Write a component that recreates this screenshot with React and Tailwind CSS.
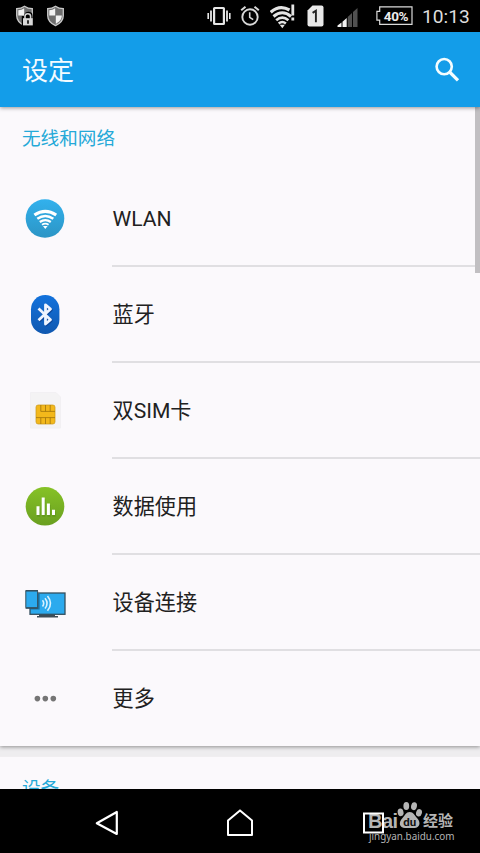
import React from 'react';

// Status bar icons
const Shield = ({ locked }) => (
  <svg width="20" height="22" viewBox="0 0 20 22">
    <path d="M9.5 1.2 C7 3 4.2 3.6 1.7 3.6 V10.5 C1.7 15 5 18.6 9.5 20.6 C14 18.6 17.3 15 17.3 10.5 V3.6 C14.8 3.6 12 3 9.5 1.2Z" fill="#6d6d6d" stroke="#c9c9c9" strokeWidth="1.3" />
    <path d="M9.2 3.2 C7.5 4.4 5.3 5 3.3 5.2 V10.6 H9.2Z" fill="#f2f2f2" />
    <path d="M9.8 10.6 H15.8 C15.8 14.5 13 17.2 9.8 18.9Z" fill="#f2f2f2" />
    {locked && (
      <g>
        <path d="M6.8 11 H9 C9 5.5 17.3 5.5 17.5 10 V22 H6.8Z" fill="#000" />
        <path d="M10 14 V11.3 C10 7.9 15.6 7.9 15.6 11.3 V14" fill="none" stroke="#d4d4d4" strokeWidth="1.6" />
        <rect x="8" y="13.2" width="9.8" height="7.2" fill="#d8d8d8" />
        <path d="M13 15.3 V18.7" stroke="#000" strokeWidth="1.6" />
      </g>
    )}
  </svg>
);

const Vibrate = () => (
  <svg width="24" height="20" viewBox="0 0 24 20" fill="none" stroke="#e6e6e6">
    <rect x="7.1" y="2" width="9.8" height="16" rx="0.5" strokeWidth="2.2" />
    <path d="M4 4.5 V15.5 M20 4.5 V15.5" strokeWidth="1.8" />
    <path d="M1.2 7 V13 M22.8 7 V13" strokeWidth="1.6" />
  </svg>
);

const Alarm = () => (
  <svg width="20" height="22" viewBox="0 0 20 22" fill="none" stroke="#d8d8d8">
    <circle cx="10" cy="12" r="7.7" strokeWidth="1.9" />
    <path d="M1.2 5.3 L5.5 1.7 M14.5 1.7 L18.8 5.3" strokeWidth="2" />
    <path d="M9.7 7.3 V12.4 L13.2 14.7" strokeWidth="1.6" />
  </svg>
);

const WifiAlert = () => (
  <svg width="25" height="25" viewBox="0 0 25 25">
    <g fill="none" stroke="#e4e4e4">
      <path d="M0.7 8.3 Q9.5 0.5 19.5 6" strokeWidth="3.2" />
      <path d="M3.5 12.5 Q12.3 5 21 12.5" strokeWidth="3" />
      <path d="M6.2 16.2 Q12.3 11 18.4 16.2" strokeWidth="2.8" />
      <path d="M8.7 19.5 Q12.3 16.5 15.9 19.5" strokeWidth="2.5" />
    </g>
    <path d="M9.7 20.8 H14.9 L12.3 24.2Z" fill="#e4e4e4" />
    <path d="M22.8 0.5 V11.5 M22.8 13.5 V16.5" stroke="#e4e4e4" strokeWidth="2.8" />
  </svg>
);

const SimSlot = () => (
  <svg width="17" height="22" viewBox="0 0 17 22">
    <path d="M5.5 0.5 H14.5 Q16.5 0.5 16.5 2.5 V19.5 Q16.5 21.5 14.5 21.5 H2.5 Q0.5 21.5 0.5 19.5 V5.5Z" fill="#e8e8e8" />
    <path d="M5.6 7.9 L8.9 5.7 V17.3" fill="none" stroke="#222" strokeWidth="1.9" />
  </svg>
);

const Signal = () => (
  <svg width="22" height="21" viewBox="0 0 22 21">
    <path d="M0.5 20 V18.6 L4.5 15.6 V20Z M5.5 20 V14.8 L9.7 11 V20Z" fill="#f2f2f2" />
    <path d="M10.7 20 V10 L15 6 V20Z M16 20 V5 L20.5 1 V20Z" fill="#505050" />
  </svg>
);

const Battery = () => (
  <div className="relative w-[37px] h-[20px]">
    <svg width="37" height="20" viewBox="0 0 37 20" fill="none" stroke="#dadada" strokeWidth="1.2">
      <path d="M3.7 0.9 H36 V18.4 H3.7 V14.2 H0.9 V5.4 H3.7Z" />
    </svg>
    <span className="absolute inset-0 pl-[3px] text-center text-[13.5px] leading-[20px] font-bold tracking-tight text-[#ececec]">40%</span>
  </div>
);

const StatusBar = () => (
  <div className="h-8 shrink-0 bg-black flex items-center pl-[15px] pr-[11px]">
    <Shield locked />
    <div className="ml-[11px]"><Shield /></div>
    <div className="ml-auto"><Vibrate /></div>
    <div className="ml-[9px]"><Alarm /></div>
    <div className="ml-[10px]"><WifiAlert /></div>
    <div className="ml-[12px]"><SimSlot /></div>
    <div className="ml-[13px] mt-[2px]"><Signal /></div>
    <div className="ml-[17px]"><Battery /></div>
    <span className="w-[47px] ml-[9px] pt-[2px] text-[19.2px] leading-[30px] text-[#dedede] whitespace-nowrap">10:13</span>
  </div>
);

// Settings list icons
const WlanIcon = () => (
  <svg width="40" height="40" viewBox="0 0 40 40">
    <defs>
      <linearGradient id="wlan" x1="0" y1="0" x2="0" y2="1">
        <stop offset="0" stopColor="#32b1ed" />
        <stop offset="1" stopColor="#2c95c5" />
      </linearGradient>
    </defs>
    <circle cx="20" cy="20.5" r="19.3" fill="url(#wlan)" />
    <g fill="none" stroke="#fff">
      <path d="M9.4 17 Q20.3 9.7 31.2 17" strokeWidth="3.2" />
      <path d="M12.3 20.7 Q20.3 15.1 28.3 20.7" strokeWidth="2.5" />
      <path d="M14.8 24 Q20.3 20.2 25.8 24" strokeWidth="2.3" />
      <path d="M17 26.8 Q20.3 24.4 23.6 26.8" strokeWidth="1.8" />
    </g>
    <path d="M18 28 H22.6 L20.3 31Z" fill="#fff" />
  </svg>
);

const BluetoothIcon = () => (
  <svg width="40" height="40" viewBox="0 0 40 40">
    <defs>
      <linearGradient id="bt" x1="0" y1="0" x2="0" y2="1">
        <stop offset="0" stopColor="#1272dc" />
        <stop offset="1" stopColor="#1058b0" />
      </linearGradient>
    </defs>
    <rect x="6" y="1" width="28.4" height="39" rx="14.2" fill="url(#bt)" />
    <path d="M13.5 14.5 L25.5 25.8 L20.5 30 V10.8 L25.5 15 L13.5 26.3" fill="none" stroke="#0c469a" strokeWidth="2.8" strokeLinejoin="round" transform="translate(0.8 1)" />
    <path d="M13.5 14.5 L25.5 25.8 L20.5 30 V10.8 L25.5 15 L13.5 26.3" fill="none" stroke="#eff5ff" strokeWidth="2.8" strokeLinejoin="round" />
  </svg>
);

const SimIcon = () => (
  <svg width="40" height="40" viewBox="0 0 40 40">
    <path d="M5.5 2.5 H31 L35.5 7 V38 H5.5Z" fill="#f4f3f4" stroke="#f0eff1" strokeWidth="0.8" />
    <rect x="11" y="15" width="19" height="19" rx="2.2" fill="#f3b81b" stroke="#c79516" strokeWidth="0.7" />
    <path d="M15.8 15 V21.4 H30 M20.5 15 V21.4 M25.2 15 V21.4 M11 27.6 H30 M15.8 27.6 V34 M20.5 27.6 V34 M25.2 27.6 V34" fill="none" stroke="#a0740c" strokeWidth="0.8" />
  </svg>
);

const DataIcon = () => (
  <svg width="40" height="40" viewBox="0 0 40 40">
    <defs>
      <linearGradient id="data" x1="0" y1="0" x2="0" y2="1">
        <stop offset="0" stopColor="#86c226" />
        <stop offset="1" stopColor="#699f20" />
      </linearGradient>
    </defs>
    <circle cx="20" cy="20.3" r="19.3" fill="url(#data)" />
    <path d="M13 30 V21 M18.2 30 V12.4 M23.4 30 V18.2 M28.5 30 V24.5" stroke="#568a18" strokeWidth="3.2" opacity="0.5" transform="translate(0.6 0.8)" />
    <path d="M13 29 V20.2 M18.2 29 V11.4 M23.4 29 V17.4 M28.5 29 V23.8" stroke="#fff" strokeWidth="3" />
  </svg>
);

const DeviceIcon = () => (
  <svg width="42" height="40" viewBox="0 0 42 40">
    <path d="M14 31.5 H30 V34 H33 V35.5 H12 V34 H14Z" fill="#3d4c56" />
    <rect x="5" y="11" width="35" height="21.3" fill="#2caaee" stroke="#35505f" strokeWidth="1.3" />
    <path d="M5 26.6 H13.6 V12" fill="none" stroke="#196f9f" strokeWidth="2" />
    <rect x="0.8" y="8.6" width="11.8" height="17.3" rx="0.7" fill="#2caaee" stroke="#35505f" strokeWidth="1" />
    <path d="M0.5 8.8 H13 M0.5 26 H13" stroke="#35505f" strokeWidth="1.6" />
    <g fill="none" stroke="#d9f2ff" strokeWidth="1.6">
      <path d="M17.5 18.2 Q19.9 21.3 17.5 24.4" />
      <path d="M20 16.2 Q24.2 21.3 20 26.4" />
      <path d="M22.5 13.9 Q28.6 21.3 22.5 28.7" />
    </g>
  </svg>
);

const MoreIcon = () => (
  <svg width="40" height="40" viewBox="0 0 40 40" fill="#757575">
    <circle cx="12.4" cy="20.6" r="2.8" />
    <circle cx="20.3" cy="20.6" r="2.8" />
    <circle cx="28.3" cy="20.6" r="2.8" />
  </svg>
);

const networkItems = [
  { id: 'wlan', label: 'WLAN', icon: WlanIcon },
  { id: 'bluetooth', label: '蓝牙', icon: BluetoothIcon },
  { id: 'sim', label: '双SIM卡', icon: SimIcon },
  { id: 'data', label: '数据使用', icon: DataIcon },
  { id: 'device', label: '设备连接', icon: DeviceIcon },
  { id: 'more', label: '更多', icon: MoreIcon },
];

const SettingRow = ({ item, last }) => {
  const Icon = item.icon;
  return (
    <div className={`flex ${last ? 'h-[95px]' : 'h-24'}`}>
      <div className="w-28 pl-[25px] pb-0.5 flex items-center">
        <Icon />
      </div>
      <div className={`flex-1 pt-0.5 pl-[0.6px] flex items-center text-[21.1px] text-[#212121] border-b-2 ${last ? 'border-transparent' : 'border-[#e0dfe2]'}`}>
        <span>{item.label}</span>
      </div>
    </div>
  );
};

const SectionTitle = ({ children }) => (
  <h2 className="h-16 pt-[2px] pl-[22px] flex items-center text-[18.6px] text-[#25a9d8]">{children}</h2>
);

// Site mark over the bottom right corner
const Watermark = () => (
  <div className="absolute left-[368px] top-[11px] w-[90px] text-[#b5b5b5]">
    <div className="flex items-end h-[30px]">
      <span className="w-[29px] text-[20px] leading-[18px] font-bold tracking-[-0.5px] font-['Liberation_Sans',sans-serif]">Bai</span>
      <svg width="26" height="28" viewBox="0 0 26 28" className="mb-px" fill="#b5b5b5">
        <ellipse cx="3.6" cy="11.3" rx="2.9" ry="3.9" transform="rotate(-12 3.6 11.3)" />
        <ellipse cx="9.3" cy="5" rx="2.9" ry="4" />
        <ellipse cx="17" cy="5.2" rx="2.9" ry="4" transform="rotate(12 17 5.2)" />
        <ellipse cx="22" cy="11.8" rx="2.9" ry="3.8" transform="rotate(15 22 11.8)" />
        <path d="M12.7 11 C16.5 11 17.5 14.5 20 17 C24.5 21.5 22.5 27 17.5 27 H8 C2.5 27 1 21.5 5.5 17 C8 14.5 9 11 12.7 11Z" />
        <text x="12.8" y="24.5" textAnchor="middle" fontSize="11.5" fontWeight="700" fill="#111">du</text>
      </svg>
      <span className="text-[15px] leading-[17px] font-bold whitespace-nowrap">经验</span>
    </div>
    <div className="pl-px text-[9.9px] leading-[13px] font-['Noto_Sans',sans-serif] whitespace-nowrap">jingyan.baidu.com</div>
  </div>
);

const NavBar = () => (
  <div className="relative h-16 shrink-0 bg-black">
    <svg width="480" height="64" viewBox="0 0 480 64" fill="none" stroke="#fff" strokeWidth="2.2" strokeLinejoin="round">
      <path d="M116.8 23 V45 L96.8 34.2Z" />
      <path d="M240 21.4 L252 31.5 V46 H228 V31.5Z" strokeWidth="2" />
    </svg>
    <Watermark />
    <svg className="absolute left-[362px] top-[23px]" width="23" height="23" viewBox="0 0 23 23" fill="none" stroke="#fff" strokeWidth="2">
      <rect x="2" y="1.5" width="19" height="19" />
    </svg>
  </div>
);

const App = () => {
  return (
    <div className="w-[480px] h-[853px] overflow-hidden flex flex-col bg-[#eeedef] font-['Roboto','Noto_Sans_CJK_SC',sans-serif]">
      <StatusBar />

      {/* App bar */}
      <header className="relative z-10 h-[75px] shrink-0 bg-[#139de9] flex items-center justify-between pl-[22px] pr-[19px] shadow-[0_1px_4px_rgba(0,0,0,0.4)]">
        <h1 className="pt-[3px] text-[26px] text-[#f4fbff]">设定</h1>
        <svg width="28" height="28" viewBox="0 0 28 28" fill="none" stroke="#f4fdff">
          <circle cx="11.2" cy="10.6" r="7.6" strokeWidth="2.6" />
          <path d="M16.6 16 L25 24.3" strokeWidth="3.2" />
        </svg>
      </header>

      <main className="relative flex-1 min-h-0 overflow-hidden">
        <section className="bg-[#fbf9fc] shadow-[0_1px_4px_rgba(0,0,0,0.4)]">
          <SectionTitle>无线和网络</SectionTitle>
          {networkItems.map((item, i) => (
            <SettingRow key={item.id} item={item} last={i === networkItems.length - 1} />
          ))}
        </section>

        <section className="mt-[10px] bg-[#fbf9fc] border-t border-[#f0eef0]">
          <SectionTitle>设备</SectionTitle>
        </section>

        {/* Scrollbar */}
        <div className="absolute right-0 top-0 w-[5px] h-[166px] bg-[#c1bfc2]" />
      </main>

      <NavBar />
    </div>
  );
};

export default App;
